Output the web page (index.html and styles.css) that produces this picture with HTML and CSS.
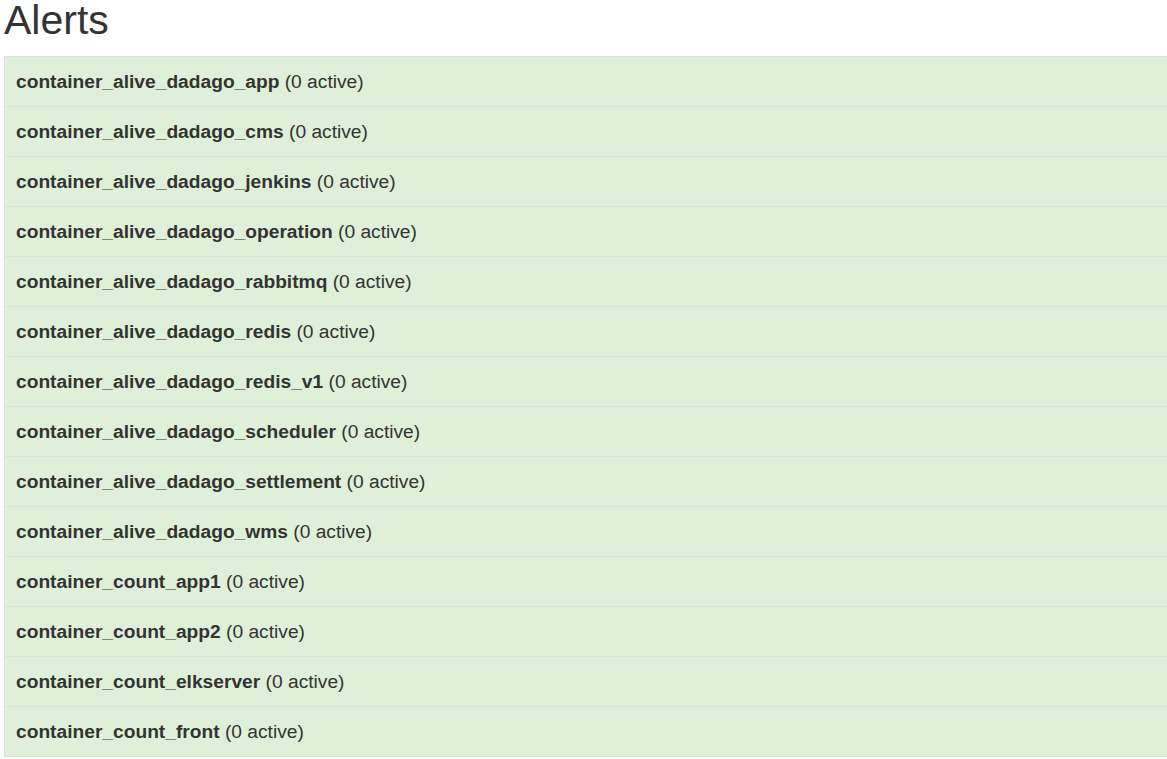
FILE: index.html
```html
<!DOCTYPE html>
<html>
<head>
<meta charset="utf-8">
<link rel="stylesheet" href="styles.css">
</head>
<body>
<div class="page">
  <h1 class="title">Alerts</h1>
  <table class="alerts">
    <tbody>
      <tr><td><b>container_alive_dadago_app</b> (0 active)</td></tr>
      <tr><td><b>container_alive_dadago_cms</b> (0 active)</td></tr>
      <tr><td><b>container_alive_dadago_jenkins</b> (0 active)</td></tr>
      <tr><td><b>container_alive_dadago_operation</b> (0 active)</td></tr>
      <tr><td><b>container_alive_dadago_rabbitmq</b> (0 active)</td></tr>
      <tr><td><b>container_alive_dadago_redis</b> (0 active)</td></tr>
      <tr><td><b>container_alive_dadago_redis_v1</b> (0 active)</td></tr>
      <tr><td><b>container_alive_dadago_scheduler</b> (0 active)</td></tr>
      <tr><td><b>container_alive_dadago_settlement</b> (0 active)</td></tr>
      <tr><td><b>container_alive_dadago_wms</b> (0 active)</td></tr>
      <tr><td><b>container_count_app1</b> (0 active)</td></tr>
      <tr><td><b>container_count_app2</b> (0 active)</td></tr>
      <tr><td><b>container_count_elkserver</b> (0 active)</td></tr>
      <tr><td><b>container_count_front</b> (0 active)</td></tr>
    </tbody>
  </table>
</div>
</body>
</html>
```
FILE: styles.css
```css
html, body {
  margin: 0;
  padding: 0;
  background: #fff;
  overflow: hidden;
}
body {
  font-family: "Liberation Sans", Arial, sans-serif;
  color: #333;
}
.page {
  padding-left: 4px;
}
.title {
  margin: 0 0 15px 0;
  font-size: 41px;
  line-height: 41px;
  font-weight: 400;
  color: #333;
}
.alerts {
  border-collapse: collapse;
  width: 1180px;
  font-size: 19.2px;
  line-height: 27px;
}
.alerts td {
  background: #dff0d8;
  border: 1px solid #ddd;
  padding: 11px 11px;
  text-align: left;
}
.alerts b {
  font-weight: 700;
}
```
